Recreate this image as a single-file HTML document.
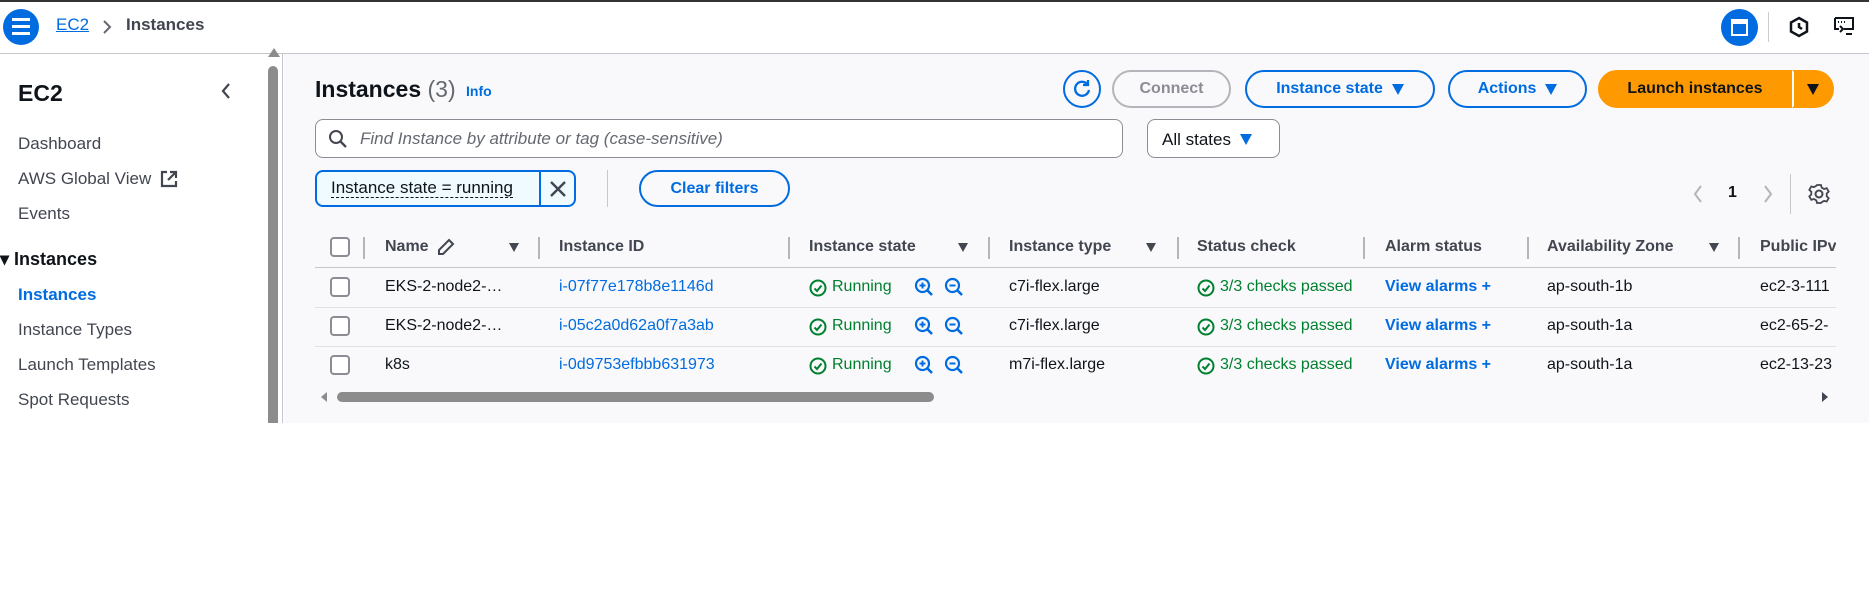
<!DOCTYPE html>
<html><head><meta charset="utf-8"><style>
*{box-sizing:border-box;margin:0;padding:0}
body{width:1869px;height:597px;background:#fff;font-family:"Liberation Sans",sans-serif;color:#0f141a;position:relative;overflow:hidden;font-size:16px}
.a{position:absolute;white-space:nowrap}
.topbar{left:0;top:0;width:1869px;height:54px;background:#fff;border-top:2px solid #333;border-bottom:1px solid #c6c6cd}
.side{left:0;top:54px;width:283px;height:369px;background:#fff;border-right:1px solid #c6c6cd}
.main{left:284px;top:54px;width:1585px;height:369px;background:#f9f9fb}
.btn{border:2px solid #006ce0;border-radius:20px;color:#006ce0;font-weight:bold;display:flex;align-items:center;justify-content:center;height:38px;top:70px;font-size:16px}
.link{color:#006ce0}
.hd{font-weight:bold;color:#424650;top:238px}
.sep{width:2px;height:22px;background:#b4b4bb;top:237px}
.cb{width:20px;height:20px;border:2px solid #8c8c94;border-radius:4px;background:#fff}
.line{height:1px;background:#e0e0e5;left:315px;width:1521px}
.green{color:#00802f}
.tri{width:0;height:0;border-left:6px solid transparent;border-right:6px solid transparent;border-top:11px solid #006ce0;display:inline-block}
.ftri{width:0;height:0;border-left:5px solid transparent;border-right:5px solid transparent;border-top:9px solid #424650}
</style></head><body>
<svg width="0" height="0" style="position:absolute"><defs>
<symbol id="ok" viewBox="0 0 18 18"><circle cx="9" cy="9" r="7.5" fill="none" stroke="#00802f" stroke-width="2"/><path d="M5.5 9.5 L8 12 L12.5 6.5" fill="none" stroke="#00802f" stroke-width="2"/></symbol>
<symbol id="zi" viewBox="0 0 20 20"><circle cx="8.5" cy="8.5" r="6.5" fill="none" stroke="#006ce0" stroke-width="2.2"/><path d="M13 13 L18 18" stroke="#006ce0" stroke-width="2.6"/><path d="M5.5 8.5h6M8.5 5.5v6" stroke="#006ce0" stroke-width="2"/></symbol>
<symbol id="zo" viewBox="0 0 20 20"><circle cx="8.5" cy="8.5" r="6.5" fill="none" stroke="#006ce0" stroke-width="2.2"/><path d="M13 13 L18 18" stroke="#006ce0" stroke-width="2.6"/><path d="M5.5 8.5h6" stroke="#006ce0" stroke-width="2"/></symbol>
</defs></svg>
<div class="a topbar"></div>
<div class="a" style="left:3px;top:9px;width:36px;height:36px;border-radius:50%;background:#006ce0"></div>
<div class="a" style="left:12px;top:18px;width:18px;height:3px;background:#fff;box-shadow:0 7px 0 #fff,0 14px 0 #fff"></div>
<div class="a link" style="left:56px;top:15px;font-size:17px;text-decoration:underline">EC2</div>
<svg class="a" style="left:102px;top:19px" width="10" height="16" viewBox="0 0 10 16"><path d="M2 2 L8 8 L2 14" fill="none" stroke="#656871" stroke-width="2"/></svg>
<div class="a" style="left:126px;top:15px;font-size:17px;font-weight:bold;color:#424650">Instances</div>
<div class="a" style="left:1721px;top:9px;width:37px;height:37px;border-radius:50%;background:#006ce0"></div>
<div class="a" style="left:1731px;top:19px;width:17px;height:17px;border:2.5px solid #fff;border-top-width:5px"></div>
<div class="a" style="left:1768px;top:12px;width:1px;height:30px;background:#ccc"></div>
<svg class="a" style="left:1788px;top:16px" width="22" height="22" viewBox="0 0 22 22"><path d="M11 2 L19 6.5 V15.5 L11 20 L3 15.5 V6.5Z M11 7 V11 L14 13" fill="none" stroke="#0f141a" stroke-width="2.5"/></svg>
<svg class="a" style="left:1833px;top:15px" width="24" height="24" viewBox="0 0 24 24"><path d="M2 3 H20 V14 H11 M2 3 V14 H6 M5 7h1M8 7h1M11 7h1 M7 11 L10 14 L7 17 M13 19 H19" fill="none" stroke="#0f141a" stroke-width="2"/></svg>

<div class="a side"></div>
<div class="a" style="left:268px;top:48px;width:0;height:0;border-left:6px solid transparent;border-right:6px solid transparent;border-bottom:9px solid #8c8c8c"></div>
<div class="a" style="left:268px;top:66px;width:10px;height:357px;background:#8c8c8c;border-radius:5px 5px 0 0"></div>
<div class="a" style="left:18px;top:80px;font-size:23px;font-weight:bold">EC2</div>
<svg class="a" style="left:220px;top:82px" width="12" height="18" viewBox="0 0 12 18"><path d="M9 2 L3 9 L9 16" fill="none" stroke="#424650" stroke-width="2.2"/></svg>
<div class="a" style="left:18px;top:134px;font-size:17px;color:#424650">Dashboard</div>
<div class="a" style="left:18px;top:169px;font-size:17px;color:#424650">AWS Global View</div>
<svg class="a" style="left:160px;top:170px" width="18" height="18" viewBox="0 0 18 18"><path d="M7 2H2V16H16V11 M10 2H16V8 M16 2L8 10" fill="none" stroke="#424650" stroke-width="2.2"/></svg>
<div class="a" style="left:18px;top:204px;font-size:17px;color:#424650">Events</div>
<div class="a" style="left:0px;top:249px;font-size:18px;font-weight:bold">▾ Instances</div>
<div class="a link" style="left:18px;top:285px;font-size:17px;font-weight:bold">Instances</div>
<div class="a" style="left:18px;top:320px;font-size:17px;color:#424650">Instance Types</div>
<div class="a" style="left:18px;top:355px;font-size:17px;color:#424650">Launch Templates</div>
<div class="a" style="left:18px;top:390px;font-size:17px;color:#424650">Spot Requests</div>

<div class="a main"></div>
<div class="a" style="left:315px;top:76px;font-size:23px;font-weight:bold">Instances <span style="font-weight:normal;color:#656871">(3)</span></div>
<div class="a link" style="left:466px;top:83px;font-size:14px;font-weight:bold">Info</div>
<div class="a" style="left:1063px;top:70px;width:38px;height:38px;border:2px solid #006ce0;border-radius:50%"></div>
<svg class="a" style="left:1071px;top:78px" width="22" height="22" viewBox="0 0 22 22"><path d="M17 7 A7 7 0 1 0 18 12 M17 2 V7 H12" fill="none" stroke="#006ce0" stroke-width="2.3"/></svg>
<div class="a btn" style="left:1112px;width:119px;border-color:#b4b4bb;color:#8c8c94">Connect</div>
<div class="a btn" style="left:1245px;width:190px">Instance state&nbsp;&nbsp;<span class="tri"></span></div>
<div class="a btn" style="left:1448px;width:139px">Actions&nbsp;&nbsp;<span class="tri"></span></div>
<div class="a btn" style="left:1598px;width:194px;background:#ff9900;border-color:#ff9900;color:#0f141a;border-radius:20px 0 0 20px">Launch instances</div>
<div class="a btn" style="left:1792px;width:42px;background:#ff9900;border-color:#ff9900;border-left:2px solid #fff;border-radius:0 20px 20px 0"><span class="tri" style="border-top-color:#0f141a"></span></div>

<div class="a" style="left:315px;top:119px;width:808px;height:39px;border:1px solid #8c8c94;border-radius:8px;background:#fff"></div>
<svg class="a" style="left:328px;top:129px" width="20" height="20" viewBox="0 0 20 20"><circle cx="8" cy="8" r="6" fill="none" stroke="#424650" stroke-width="2"/><path d="M12.5 12.5 L18 18" stroke="#424650" stroke-width="2.3"/></svg>
<div class="a" style="left:360px;top:129px;font-style:italic;color:#656871;font-size:17px">Find Instance by attribute or tag (case-sensitive)</div>
<div class="a" style="left:1147px;top:119px;width:133px;height:39px;border:1px solid #8c8c94;border-radius:8px;background:#fff;padding:10px 14px;font-size:17px">All states&nbsp;&nbsp;<span class="tri"></span></div>

<div class="a" style="left:315px;top:170px;width:261px;height:37px;border:2px solid #006ce0;border-radius:8px;background:#f0fbff"></div>
<div class="a" style="left:539px;top:170px;width:2px;height:37px;background:#006ce0"></div>
<div class="a" style="left:331px;top:178px;font-size:17px;border-bottom:1px dashed #0f141a;line-height:19px">Instance state = running</div>
<svg class="a" style="left:548px;top:179px" width="20" height="20" viewBox="0 0 20 20"><path d="M3 3L17 17M17 3L3 17" stroke="#424650" stroke-width="2.4"/></svg>
<div class="a" style="left:607px;top:170px;width:1px;height:37px;background:#c6c6cd"></div>
<div class="a btn" style="left:639px;top:170px;width:151px;height:37px">Clear filters</div>
<svg class="a" style="left:1692px;top:184px" width="12" height="20" viewBox="0 0 12 20"><path d="M9 2 L3 10 L9 18" fill="none" stroke="#b4b4bb" stroke-width="2"/></svg>
<div class="a" style="left:1728px;top:184px;font-weight:bold">1</div>
<svg class="a" style="left:1762px;top:184px" width="12" height="20" viewBox="0 0 12 20"><path d="M3 2 L9 10 L3 18" fill="none" stroke="#b4b4bb" stroke-width="2"/></svg>
<div class="a" style="left:1790px;top:174px;width:1px;height:40px;background:#c6c6cd"></div>
<svg class="a" style="left:1808px;top:183px" width="22" height="22" viewBox="0 0 22 22"><circle cx="11" cy="11" r="3.5" fill="none" stroke="#424650" stroke-width="2"/><path d="M9 2h4l.7 2.6 2.4 1.4 2.6-.8 2 3.4-2 1.9v2.8l2 1.9-2 3.4-2.6-.8-2.4 1.4L13 20H9l-.7-2.6-2.4-1.4-2.6.8-2-3.4 2-1.9V8.7l-2-1.9 2-3.4 2.6.8 2.4-1.4Z" fill="none" stroke="#424650" stroke-width="1.8"/></svg>

<div class="a cb" style="left:330px;top:237px"></div>
<div class="a sep" style="left:363px"></div>
<div class="a hd" style="left:385px">Name</div>
<svg class="a" style="left:437px;top:238px" width="18" height="18" viewBox="0 0 18 18"><path d="M12 2 L16 6 L6 16 H2 V12 Z" fill="none" stroke="#424650" stroke-width="2"/></svg>
<div class="a ftri" style="left:509px;top:243px"></div>
<div class="a sep" style="left:538px"></div>
<div class="a hd" style="left:559px">Instance ID</div>
<div class="a sep" style="left:788px"></div>
<div class="a hd" style="left:809px">Instance state</div>
<div class="a ftri" style="left:958px;top:243px"></div>
<div class="a sep" style="left:988px"></div>
<div class="a hd" style="left:1009px">Instance type</div>
<div class="a ftri" style="left:1146px;top:243px"></div>
<div class="a sep" style="left:1177px"></div>
<div class="a hd" style="left:1197px">Status check</div>
<div class="a sep" style="left:1363px"></div>
<div class="a hd" style="left:1385px">Alarm status</div>
<div class="a sep" style="left:1527px"></div>
<div class="a hd" style="left:1547px">Availability Zone</div>
<div class="a ftri" style="left:1709px;top:243px"></div>
<div class="a sep" style="left:1738px"></div>
<div class="a hd" style="left:1760px;width:76px;overflow:hidden">Public IPv4</div>
<div class="a line" style="top:267px;background:#c6c6cd"></div>

<!-- row 1 -->
<div class="a cb" style="left:330px;top:277px"></div>
<div class="a" style="left:385px;top:278px">EKS-2-node2-…</div>
<div class="a link" style="left:559px;top:278px">i-07f77e178b8e1146d</div>
<svg class="a" style="left:809px;top:279px" width="18" height="18"><use href="#ok"/></svg>
<div class="a green" style="left:832px;top:278px">Running</div>
<svg class="a" style="left:914px;top:277px" width="20" height="20"><use href="#zi"/></svg>
<svg class="a" style="left:944px;top:277px" width="20" height="20"><use href="#zo"/></svg>
<div class="a" style="left:1009px;top:278px">c7i-flex.large</div>
<svg class="a" style="left:1197px;top:279px" width="18" height="18"><use href="#ok"/></svg>
<div class="a green" style="left:1220px;top:278px;width:143px;overflow:hidden">3/3 checks passed</div>
<div class="a link" style="left:1385px;top:278px;font-weight:bold">View alarms +</div>
<div class="a" style="left:1547px;top:278px">ap-south-1b</div>
<div class="a" style="left:1760px;top:278px;width:76px;overflow:hidden">ec2-3-111</div>
<div class="a line" style="top:307px"></div>

<!-- row 2 -->
<div class="a cb" style="left:330px;top:316px"></div>
<div class="a" style="left:385px;top:317px">EKS-2-node2-…</div>
<div class="a link" style="left:559px;top:317px">i-05c2a0d62a0f7a3ab</div>
<svg class="a" style="left:809px;top:318px" width="18" height="18"><use href="#ok"/></svg>
<div class="a green" style="left:832px;top:317px">Running</div>
<svg class="a" style="left:914px;top:316px" width="20" height="20"><use href="#zi"/></svg>
<svg class="a" style="left:944px;top:316px" width="20" height="20"><use href="#zo"/></svg>
<div class="a" style="left:1009px;top:317px">c7i-flex.large</div>
<svg class="a" style="left:1197px;top:318px" width="18" height="18"><use href="#ok"/></svg>
<div class="a green" style="left:1220px;top:317px;width:143px;overflow:hidden">3/3 checks passed</div>
<div class="a link" style="left:1385px;top:317px;font-weight:bold">View alarms +</div>
<div class="a" style="left:1547px;top:317px">ap-south-1a</div>
<div class="a" style="left:1760px;top:317px;width:76px;overflow:hidden">ec2-65-2-</div>
<div class="a line" style="top:346px"></div>

<!-- row 3 -->
<div class="a cb" style="left:330px;top:355px"></div>
<div class="a" style="left:385px;top:356px">k8s</div>
<div class="a link" style="left:559px;top:356px">i-0d9753efbbb631973</div>
<svg class="a" style="left:809px;top:357px" width="18" height="18"><use href="#ok"/></svg>
<div class="a green" style="left:832px;top:356px">Running</div>
<svg class="a" style="left:914px;top:355px" width="20" height="20"><use href="#zi"/></svg>
<svg class="a" style="left:944px;top:355px" width="20" height="20"><use href="#zo"/></svg>
<div class="a" style="left:1009px;top:356px">m7i-flex.large</div>
<svg class="a" style="left:1197px;top:357px" width="18" height="18"><use href="#ok"/></svg>
<div class="a green" style="left:1220px;top:356px;width:143px;overflow:hidden">3/3 checks passed</div>
<div class="a link" style="left:1385px;top:356px;font-weight:bold">View alarms +</div>
<div class="a" style="left:1547px;top:356px">ap-south-1a</div>
<div class="a" style="left:1760px;top:356px;width:76px;overflow:hidden">ec2-13-23</div>

<div class="a" style="left:321px;top:392px;width:0;height:0;border-top:5px solid transparent;border-bottom:5px solid transparent;border-right:6px solid #8c8c8c"></div>
<div class="a" style="left:337px;top:392px;width:597px;height:10px;background:#8c8c8c;border-radius:5px"></div>
<div class="a" style="left:1822px;top:392px;width:0;height:0;border-top:5px solid transparent;border-bottom:5px solid transparent;border-left:6px solid #424650"></div>
</body></html>
